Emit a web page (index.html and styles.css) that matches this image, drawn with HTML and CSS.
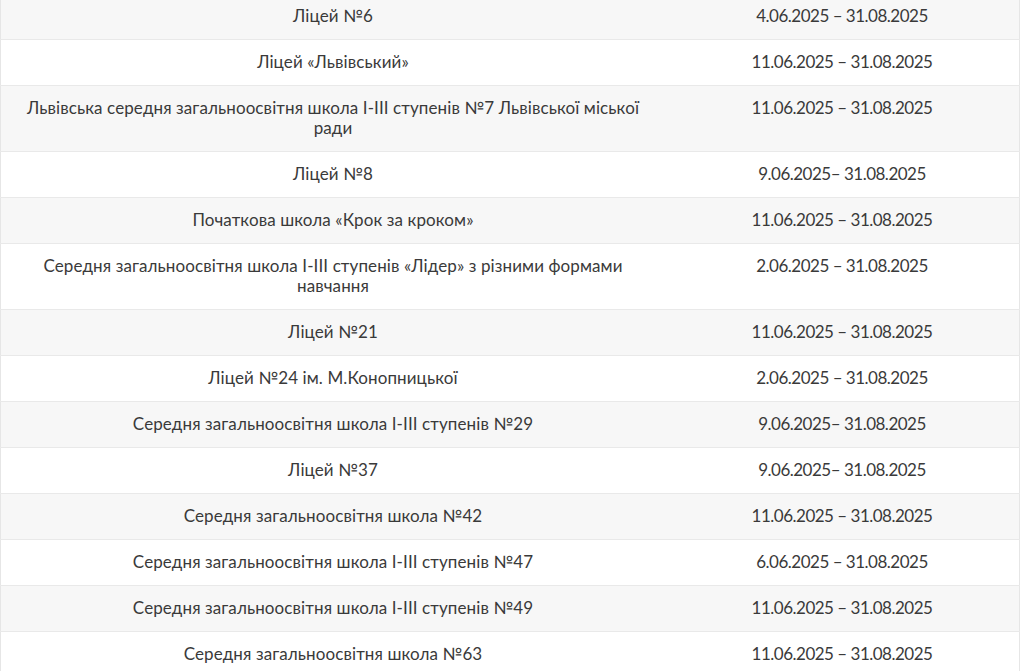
FILE: index.html
```html
<!DOCTYPE html>
<html lang="uk">
<head>
<meta charset="utf-8">
<link rel="stylesheet" href="styles.css">
</head>
<body>
<div class="wrap">
<table class="schools">
<tbody>
<tr><td class="name">Ліцей №6</td><td class="date">4.06.2025 – 31.08.2025</td></tr>
<tr><td class="name">Ліцей «Львівський»</td><td class="date">11.06.2025 – 31.08.2025</td></tr>
<tr><td class="name">Львівська середня загальноосвітня школа І-ІІІ ступенів №7 Львівської міської ради</td><td class="date">11.06.2025 – 31.08.2025</td></tr>
<tr><td class="name">Ліцей №8</td><td class="date">9.06.2025– 31.08.2025</td></tr>
<tr><td class="name">Початкова школа «Крок за кроком»</td><td class="date">11.06.2025 – 31.08.2025</td></tr>
<tr><td class="name">Середня загальноосвітня школа І-ІІІ ступенів «Лідер» з різними формами навчання</td><td class="date">2.06.2025 – 31.08.2025</td></tr>
<tr><td class="name">Ліцей №21</td><td class="date">11.06.2025 – 31.08.2025</td></tr>
<tr><td class="name">Ліцей №24 ім. М.Конопницької</td><td class="date">2.06.2025 – 31.08.2025</td></tr>
<tr><td class="name">Середня загальноосвітня школа І-ІІІ ступенів №29</td><td class="date">9.06.2025– 31.08.2025</td></tr>
<tr><td class="name">Ліцей №37</td><td class="date">9.06.2025– 31.08.2025</td></tr>
<tr><td class="name">Середня загальноосвітня школа №42</td><td class="date">11.06.2025 – 31.08.2025</td></tr>
<tr><td class="name">Середня загальноосвітня школа І-ІІІ ступенів №47</td><td class="date">6.06.2025 – 31.08.2025</td></tr>
<tr><td class="name">Середня загальноосвітня школа І-ІІІ ступенів №49</td><td class="date">11.06.2025 – 31.08.2025</td></tr>
<tr><td class="name">Середня загальноосвітня школа №63</td><td class="date">11.06.2025 – 31.08.2025</td></tr>
</tbody>
</table>
</div>
</body>
</html>
```
FILE: styles.css
```css
html, body {
  margin: 0;
  padding: 0;
  background: #fff;
}
body {
  font-family: Lato, "Noto Sans", sans-serif;
  font-size: 17px;
  color: #3a3a3a;
  overflow: hidden;
}
.wrap {
  width: 1020px;
  margin-top: -7px;
}
.schools {
  width: 1020px;
  border-collapse: collapse;
  table-layout: fixed;
  border-left: 1px solid #e6e6e6;
  border-right: 1px solid #e6e6e6;
}
.schools td {
  border-top: 1px solid #e9e9e9;
  padding: 12px 20px 13px;
  line-height: 20px;
  text-align: center;
  vertical-align: top;
}
.schools tr:nth-child(odd) td {
  background: #f7f7f7;
}
.schools .name {
  width: 624px;
  letter-spacing: 0.1px;
}
.schools .date {
  letter-spacing: -0.5px;
}
```
